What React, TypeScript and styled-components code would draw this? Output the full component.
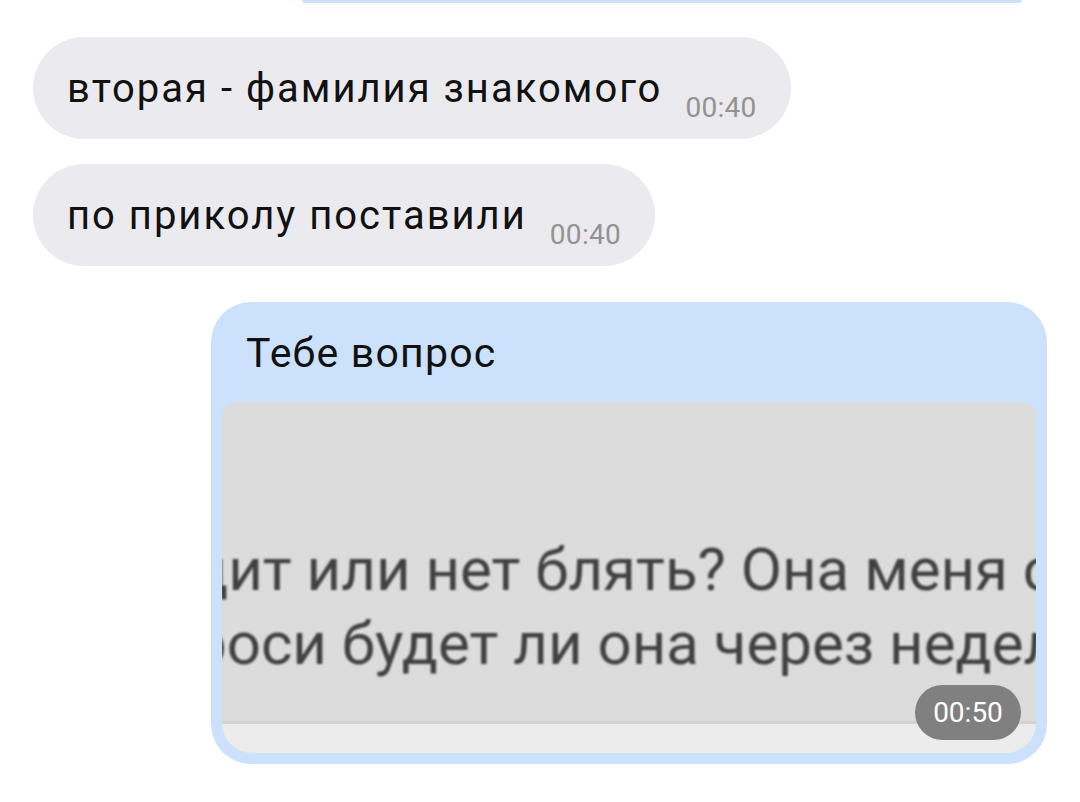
import React from 'react';
import styled, { createGlobalStyle } from 'styled-components';

const GlobalStyle = createGlobalStyle`
  html, body {
    margin: 0;
    padding: 0;
    background: #ffffff;
    overflow: hidden;
  }
  body {
    font-family: Roboto, "Noto Sans", "Liberation Sans", sans-serif;
  }
`;

const Chat = styled.div`
  width: 1080px;
  height: 802px;
  display: flex;
  flex-direction: column;
  align-items: flex-start;
  background: #ffffff;
`;

const PrevBubbleTail = styled.div`
  margin-left: 302px;
  width: 720px;
  height: 3px;
  background: #cce2fc;
  border-radius: 0 0 30px 30px;
  box-shadow: 0 4px 6px rgba(0, 0, 0, 0.04);
`;

const IncomingBubble = styled.div<{ $top: number }>`
  margin: ${p => p.$top}px 0 0 33px;
  box-sizing: border-box;
  height: 102px;
  padding: 28px 34px 0 34px;
  display: flex;
  align-items: flex-start;
  gap: 23px;
  background: #ebebef;
  border-radius: 51px;
`;

const MessageText = styled.span`
  font-size: 40px;
  line-height: 48px;
  letter-spacing: 2px;
  color: #111111;
  white-space: nowrap;
`;

const Time = styled.span`
  margin-top: 27px;
  font-size: 28px;
  line-height: 32px;
  letter-spacing: 0.3px;
  color: #939393;
  white-space: nowrap;
`;

const OutgoingBubble = styled.div`
  margin: 36px 0 0 211px;
  width: 836px;
  box-sizing: border-box;
  padding: 11px;
  background: #cce2fc;
  border-radius: 40px;
  display: flex;
  flex-direction: column;
`;

const Caption = styled.div`
  padding: 16px 24px 25px;
  font-size: 41px;
  line-height: 48px;
  letter-spacing: 1.2px;
  color: #111111;
`;

const Photo = styled.div`
  position: relative;
  height: 351px;
  border-radius: 14px 14px 30px 30px;
  overflow: hidden;
  background: #dcdcdc;
  display: flex;
  flex-direction: column;
`;

const PhotoBody = styled.div`
  flex: 1;
  padding-top: 138px;
  display: flex;
  flex-direction: column;
  gap: 14px;
`;

const PhotoLine = styled.div<{ $shift: number }>`
  margin-left: ${p => p.$shift}px;
  font-size: 60px;
  line-height: 60px;
  color: #414141;
  white-space: nowrap;
  filter: blur(1px);
`;

const PhotoFooter = styled.div`
  height: 29px;
  border-top: 3px solid #d3d3d3;
  background: #ececec;
`;

const TimePill = styled.div`
  position: absolute;
  right: 15px;
  bottom: 13px;
  width: 106px;
  height: 55px;
  border-radius: 28px;
  background: #808080;
  color: #ffffff;
  font-size: 28px;
  display: flex;
  align-items: center;
  justify-content: center;
`;

export default function App() {
  return (
    <>
      <GlobalStyle />
      <Chat>
        <PrevBubbleTail />
        <IncomingBubble $top={34}>
          <MessageText>вторая - фамилия знакомого</MessageText>
          <Time>00:40</Time>
        </IncomingBubble>
        <IncomingBubble $top={25}>
          <MessageText>по приколу поставили</MessageText>
          <Time>00:40</Time>
        </IncomingBubble>
        <OutgoingBubble>
          <Caption>Тебе вопрос</Caption>
          <Photo>
            <PhotoBody>
              <PhotoLine $shift={-30}>дит или нет блять? Она меня спрашивает</PhotoLine>
              <PhotoLine $shift={-95}>спроси будет ли она через неделю</PhotoLine>
            </PhotoBody>
            <PhotoFooter />
            <TimePill>00:50</TimePill>
          </Photo>
        </OutgoingBubble>
      </Chat>
    </>
  );
}
